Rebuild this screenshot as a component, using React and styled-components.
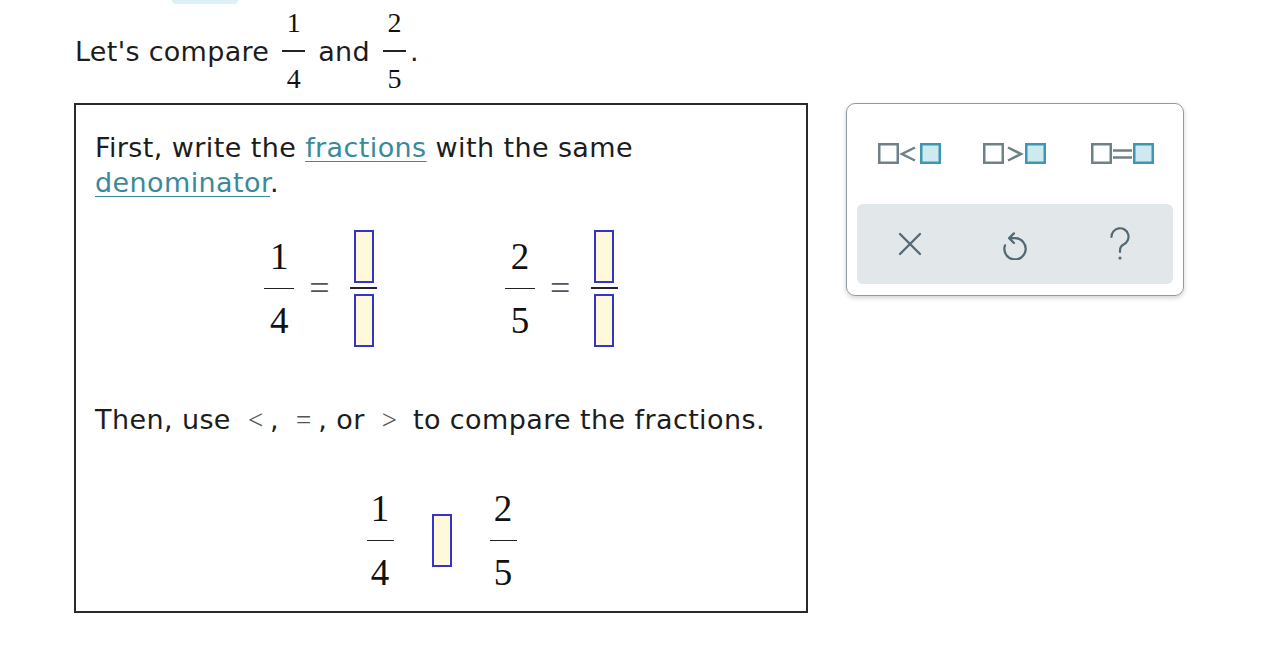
import React from 'react';
import styled, { createGlobalStyle } from 'styled-components';

const GlobalStyle = createGlobalStyle`
  body {
    margin: 0;
    background: #fff;
    font-family: "DejaVu Sans", Verdana, sans-serif;
    color: #1c1c1c;
  }
`;

const Page = styled.div`
  display: flex;
  flex-direction: column;
  padding-left: 74px;
`;

const TopPill = styled.div`
  margin-left: 98px;
  width: 66px;
  height: 4px;
  background: #dcf0f5;
  border-radius: 0 0 12px 12px;
`;

const Header = styled.div`
  height: 94px;
  display: flex;
  align-items: center;
  font-size: 27px;
  letter-spacing: 0.3px;
  padding-left: 1px;
`;

const Word = styled.span`
  margin: 0 13px;
  &:first-child { margin-left: 0; }
`;

const Dot = styled.span`
  margin-left: 4px;
`;

const Frac = styled.span`
  display: inline-flex;
  flex-direction: column;
  align-items: center;
  font-family: "Liberation Serif", "Times New Roman", serif;
  font-size: ${p => p.$size}px;
  line-height: ${p => p.$size}px;
  letter-spacing: 0;
  color: #111;
`;

const Bar = styled.span`
  display: block;
  width: ${p => p.$w}px;
  height: 1.5px;
  background: #222;
  margin: ${p => p.$gap}px 0;
`;

const Main = styled.div`
  display: flex;
  align-items: flex-start;
  margin-top: 5px;
`;

const Panel = styled.div`
  width: 734px;
  height: 510px;
  box-sizing: border-box;
  border: 2px solid #2a2a2a;
  padding: 25px 19px;
  font-size: 27px;
  letter-spacing: 0.4px;
`;

const Para = styled.p`
  margin: 0;
  line-height: 35px;
`;

const Link = styled.span`
  color: #3a8a9c;
  text-decoration: underline;
  text-underline-offset: 4px;
  text-decoration-thickness: 1px;
`;

const Sym = styled.span`
  font-family: "Liberation Serif", "Times New Roman", serif;
  color: #555;
  margin: 0 7px 0 8px;
  letter-spacing: 0;
`;

const EqRow = styled.div`
  display: flex;
  justify-content: center;
  gap: 128px;
  margin-top: 30px;
`;

const EqGroup = styled.div`
  display: flex;
  align-items: center;
`;

const Equals = styled.span`
  font-family: "Liberation Serif", "Times New Roman", serif;
  font-size: 36px;
  color: #555;
  margin: 0 20px 0 15px;
`;

const InputFrac = styled.span`
  display: inline-flex;
  flex-direction: column;
  align-items: center;
`;

const InputBox = styled.span`
  display: block;
  width: 20px;
  height: 53px;
  box-sizing: border-box;
  border: 2px solid #3434c8;
  background: #fff9dc;
`;

const InputBar = styled.span`
  display: block;
  width: 27px;
  height: 1.5px;
  background: #222;
  margin: 4px 0 5px;
`;

const ThenPara = styled(Para)`
  margin-top: 55px;
`;

const CompareRow = styled.div`
  display: flex;
  justify-content: center;
  align-items: center;
  gap: 38px;
  margin-top: 52px;
  padding-left: 1px;
`;

const Keypad = styled.div`
  margin-left: 38px;
  width: 338px;
  height: 193px;
  box-sizing: border-box;
  border: 1.5px solid #8c9ca4;
  border-radius: 9px;
  box-shadow: 0 2px 5px rgba(0, 0, 0, 0.18);
  padding: 0 10px 10px;
  display: flex;
  flex-direction: column;
`;

const KeyRow = styled.div`
  display: grid;
  grid-template-columns: repeat(3, 1fr);
  align-items: center;
  justify-items: center;
  height: 100px;
`;

const ActionRow = styled(KeyRow)`
  height: 80px;
  background: #e2e7ea;
  border-radius: 6px;
`;

const Key = styled.span`
  display: flex;
  align-items: center;
  justify-content: center;
  margin-left: ${p => p.$shift || 0}px;
`;

const grey = '#6f8089';
const teal = '#3c98b1';
const ink = '#526973';

const Fraction = ({ n, d, size = 37, w = 28, gap = 13 }) => (
  <Frac $size={size}>
    <span>{n}</span>
    <Bar $w={w} $gap={gap} />
    <span>{d}</span>
  </Frac>
);

const BlankFrac = () => (
  <InputFrac>
    <InputBox />
    <InputBar />
    <InputBox />
  </InputFrac>
);

const CompareIcon = ({ op }) => (
  <svg width="64" height="22" viewBox="0 0 64 22">
    <rect x="1.25" y="1.25" width="18.5" height="18.5" fill="none" stroke={grey} strokeWidth="2.5" />
    {op === '<' && <polyline points="37,4.5 24,11 37,17.5" fill="none" stroke={grey} strokeWidth="2.5" />}
    {op === '>' && <polyline points="25,4.5 38,11 25,17.5" fill="none" stroke={grey} strokeWidth="2.5" />}
    {op === '=' && (
      <g stroke={grey} strokeWidth="2.5">
        <line x1="22" y1="7.5" x2="41" y2="7.5" />
        <line x1="22" y1="14.5" x2="41" y2="14.5" />
      </g>
    )}
    <rect x="43.25" y="1.25" width="18.5" height="18.5" fill="#cfe9f1" stroke={teal} strokeWidth="2.5" />
  </svg>
);

const ClearIcon = () => (
  <svg width="24" height="24" viewBox="0 0 24 24">
    <path d="M2 2 L22 22 M22 2 L2 22" stroke={ink} strokeWidth="2.3" strokeLinecap="round" />
  </svg>
);

const UndoIcon = () => (
  <svg width="28" height="32" viewBox="0 0 26 30">
    <path
      d="M12 5 L7.5 9.5 L12 14 M8 9.5 H13 A10 10 0 1 1 3.6 16.2"
      fill="none"
      stroke={ink}
      strokeWidth="2.1"
      strokeLinecap="round"
      strokeLinejoin="round"
    />
  </svg>
);

const HelpIcon = () => (
  <svg width="24" height="34" viewBox="0 0 24 34">
    <path
      d="M3.5 10 A8.5 8.5 0 1 1 15.5 17.5 C13 18.8 12 20.5 12 23.5 V25"
      fill="none"
      stroke={ink}
      strokeWidth="2.2"
      strokeLinecap="round"
    />
    <circle cx="12" cy="31" r="1.6" fill={ink} />
  </svg>
);

export default function App() {
  return (
    <>
      <GlobalStyle />
      <Page>
        <TopPill />
        <Header>
          <Word>Let's compare</Word>
          <Fraction n="1" d="4" size={28} w={23} gap={13} />
          <Word>and</Word>
          <Fraction n="2" d="5" size={28} w={23} gap={13} />
          <Dot>.</Dot>
        </Header>

        <Main>
          <Panel>
            <Para>
              First, write the <Link>fractions</Link> with the same <Link>denominator</Link>.
            </Para>

            <EqRow>
              <EqGroup>
                <Fraction n="1" d="4" w={30} />
                <Equals>=</Equals>
                <BlankFrac />
              </EqGroup>
              <EqGroup>
                <Fraction n="2" d="5" w={30} />
                <Equals>=</Equals>
                <BlankFrac />
              </EqGroup>
            </EqRow>

            <ThenPara>
              Then, use <Sym>&lt;</Sym>, <Sym>=</Sym>, or <Sym>&gt;</Sym> to compare the fractions.
            </ThenPara>

            <CompareRow>
              <Fraction n="1" d="4" w={27} />
              <InputBox />
              <Fraction n="2" d="5" w={27} />
            </CompareRow>
          </Panel>

          <Keypad>
            <KeyRow>
              <Key><CompareIcon op="<" /></Key>
              <Key><CompareIcon op=">" /></Key>
              <Key $shift={6}><CompareIcon op="=" /></Key>
            </KeyRow>
            <ActionRow>
              <Key><ClearIcon /></Key>
              <Key><UndoIcon /></Key>
              <Key><HelpIcon /></Key>
            </ActionRow>
          </Keypad>
        </Main>
      </Page>
    </>
  );
}
